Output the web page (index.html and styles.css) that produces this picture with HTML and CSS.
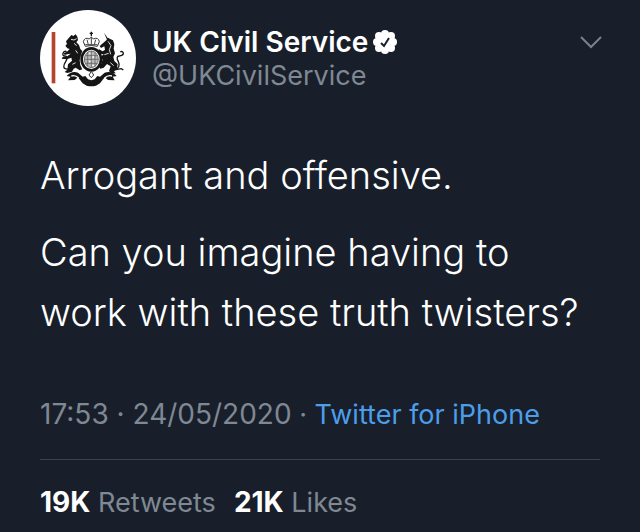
FILE: index.html
```html
<!DOCTYPE html>
<html lang="en">
<head>
  <meta charset="UTF-8">
  <meta name="viewport" content="width=device-width, initial-scale=1.0">
  <title>UK Civil Service</title>
  <link rel="stylesheet" href="styles.css">
</head>
<body>
  <article class="tweet">
    <header class="tweet-header">
      <svg class="avatar" viewBox="30 30 288 288" role="img" aria-label="Royal coat of arms">
        <circle cx="174" cy="174" r="144" fill="#fff"/>
        <rect x="65" y="96" width="11" height="154" fill="#b5442f"/>
        <!-- Ribbon -->
        <path d="M110 228q14-16 34-10l14 12 8-2 8 10q10 5 20 0l8-10 8 2 14-12q22-6 36 10l-12 2 6 11-20-1-10-8-14 18-12 7q-14 4-28 0l-12-7-14-18-10 8-20 1 8-11z" fill="#151515"/>
        <path d="M124 228q12-4 22 6M246 228q-12-4-22 6" fill="none" stroke="#fff" stroke-width="4"/>
        <!-- Lion -->
        <path d="M119 111l5-6 6 3 7-5 5 7 2 10-5 7 8 8 4 12 6 6-4 11-4 17 2 15 6 12-8 3-12-8-6 3-5 9-14 4-8-3 8-7 2-16 12-11-2-9-14 5-15-2 3-5 14-2 10-8-8 1-10 3-3-5 10-5 8-8-7-2-6-8 5-5-3-8z" fill="#151515"/>
        <path d="M123 118l9 2 8-4M132 130l8 7M137 151l6 9M127 193l10-5" fill="none" stroke="#ddd" stroke-width="3"/>
        <path d="M117 207c-22 3-16-13-10-22 6-9 4-17-2-17-5 0-9-4-5-10 2-4 8-6 9-2" fill="none" stroke="#151515" stroke-width="4"/>
        <!-- Unicorn -->
        <path d="M222 98l13 19-4 2z" fill="#151515"/>
        <path d="M229 121l5-8 5 3 10 5 4 12-2 13 4 14-5 11 3 12 10 9-2 14-9 8 5 6-13 1-7-8 5-14-11-7-10 11-10 3-5-7 8-8 4-13-15 2-3-6 13-4 8-7-14-2-5-8 5-5 11 6 7-5-2-10-10 5-4-6z" fill="#151515"/>
        <path d="M234 124l9 13-5 12 4 14M223 164l13-4M241 188l10 9" fill="none" stroke="#ddd" stroke-width="3"/>
        <path d="M252 206c16 2 18-11 13-21-6-9-4-17 3-17 6-1 12-1 12-8 0-5-6-7-9-4M250 210l24-4 6 4" fill="none" stroke="#151515" stroke-width="4"/>
        <!-- Crown -->
        <path d="M184 95v14M179 100h10" stroke="#151515" stroke-width="4"/>
        <path d="M166 139l-6-14q4-15 18-8l6-6 6 6q15-7 18 8l-6 14q-18-5-36 0z" fill="#fff" stroke="#333" stroke-width="3"/>
        <path d="M184 112v22M171 119l4 15M197 119l-4 15M166 134h36" fill="none" stroke="#444" stroke-width="3"/>
        <!-- Shield and garter -->
        <ellipse cx="184" cy="178" rx="29" ry="33" fill="#fff" stroke="#151515" stroke-width="8"/>
        <ellipse cx="184" cy="178" rx="21" ry="25" fill="#bbb" stroke="#444" stroke-width="2"/>
        <path d="M184 153v50M163 178h42M173 157v42M195 157v42M166 167h36M166 190h36" fill="none" stroke="#555" stroke-width="2"/>
        <path d="M177 160h4M187 171h5M177 184h4M187 196h5" stroke="#fff" stroke-width="4"/>
        <path d="M184 214l7 11-7 8-7-8z" fill="#fff" stroke="#333" stroke-width="3"/>
      </svg>
      <div class="author">
        <div class="name-row">
          <span class="name">UK Civil Service</span>
          <svg class="verified" viewBox="0 0 24 24" role="img" aria-label="Verified account">
            <g fill="#fff">
              <circle cx="12" cy="12" r="9"/>
              <circle cx="12" cy="4" r="4"/>
              <circle cx="18" cy="6" r="4"/>
              <circle cx="20" cy="12" r="4"/>
              <circle cx="18" cy="18" r="4"/>
              <circle cx="12" cy="20" r="4"/>
              <circle cx="6" cy="18" r="4"/>
              <circle cx="4" cy="12" r="4"/>
              <circle cx="6" cy="6" r="4"/>
            </g>
            <path d="M8 13l3 3 5-8" fill="none" stroke="#181f2a" stroke-width="2"/>
          </svg>
        </div>
        <span class="handle">@UKCivilService</span>
      </div>
      <button class="menu" type="button" aria-label="More options">
        <svg viewBox="0 0 22 14">
          <path d="M1 2l10 10L21 2" fill="none" stroke="#78828d" stroke-width="2"/>
        </svg>
      </button>
    </header>

    <div class="tweet-text">
      <p>Arrogant and offensive.</p>
      <p>Can you imagine having to work with these truth twisters?</p>
    </div>

    <div class="meta">
      <time datetime="2020-05-24T17:53">17:53 · 24/05/2020</time> · <a href="#">Twitter for iPhone</a>
    </div>

    <footer class="stats">
      <span><strong>19K</strong> Retweets</span>
      <span><strong>21K</strong> Likes</span>
    </footer>
  </article>
</body>
</html>
```
FILE: styles.css
```css
body {
  margin: 0;
  background-color: #181f2a;
  color: #ffffff;
  font-family: Inter, "Liberation Sans", sans-serif;
}

.tweet {
  padding: 10px 38px 0 40px;
}

.tweet-header {
  display: flex;
  align-items: flex-start;
}

.avatar {
  flex: none;
  width: 96px;
  height: 96px;
  margin-right: 16px;
}

.author {
  flex: 1;
  padding-top: 15px;
  font-size: 27px;
  line-height: 34px;
}

.name-row {
  display: flex;
  align-items: center;
  gap: 5px;
}

.name {
  font-size: 28px;
  font-weight: 600;
}

.verified {
  width: 24px;
  height: 24px;
}

.handle {
  color: #7f8893;
}

.menu {
  margin-top: 25px;
  padding: 0;
  border: none;
  background: none;
  cursor: pointer;
}

.menu svg {
  display: block;
  width: 22px;
  height: 14px;
}

.tweet-text {
  margin-top: 39px;
  font-size: 38px;
  font-weight: 300;
  line-height: 60px;
}

.tweet-text p {
  margin: 0 0 17px;
}

.meta {
  margin: 55px 2px 0 0;
  padding-bottom: 27px;
  border-bottom: 1px solid #3b424c;
  color: #7f8893;
  font-size: 27px;
  line-height: 34px;
}

.meta time {
  font-size: 28px;
}

.meta a {
  color: #4c9eeb;
  text-decoration: none;
}

.stats {
  display: flex;
  gap: 18px;
  padding: 25px 0 10px;
  color: #7f8893;
  font-size: 27px;
  line-height: 34px;
}

.stats strong {
  color: #ffffff;
  font-size: 28px;
  font-weight: 700;
}
```
